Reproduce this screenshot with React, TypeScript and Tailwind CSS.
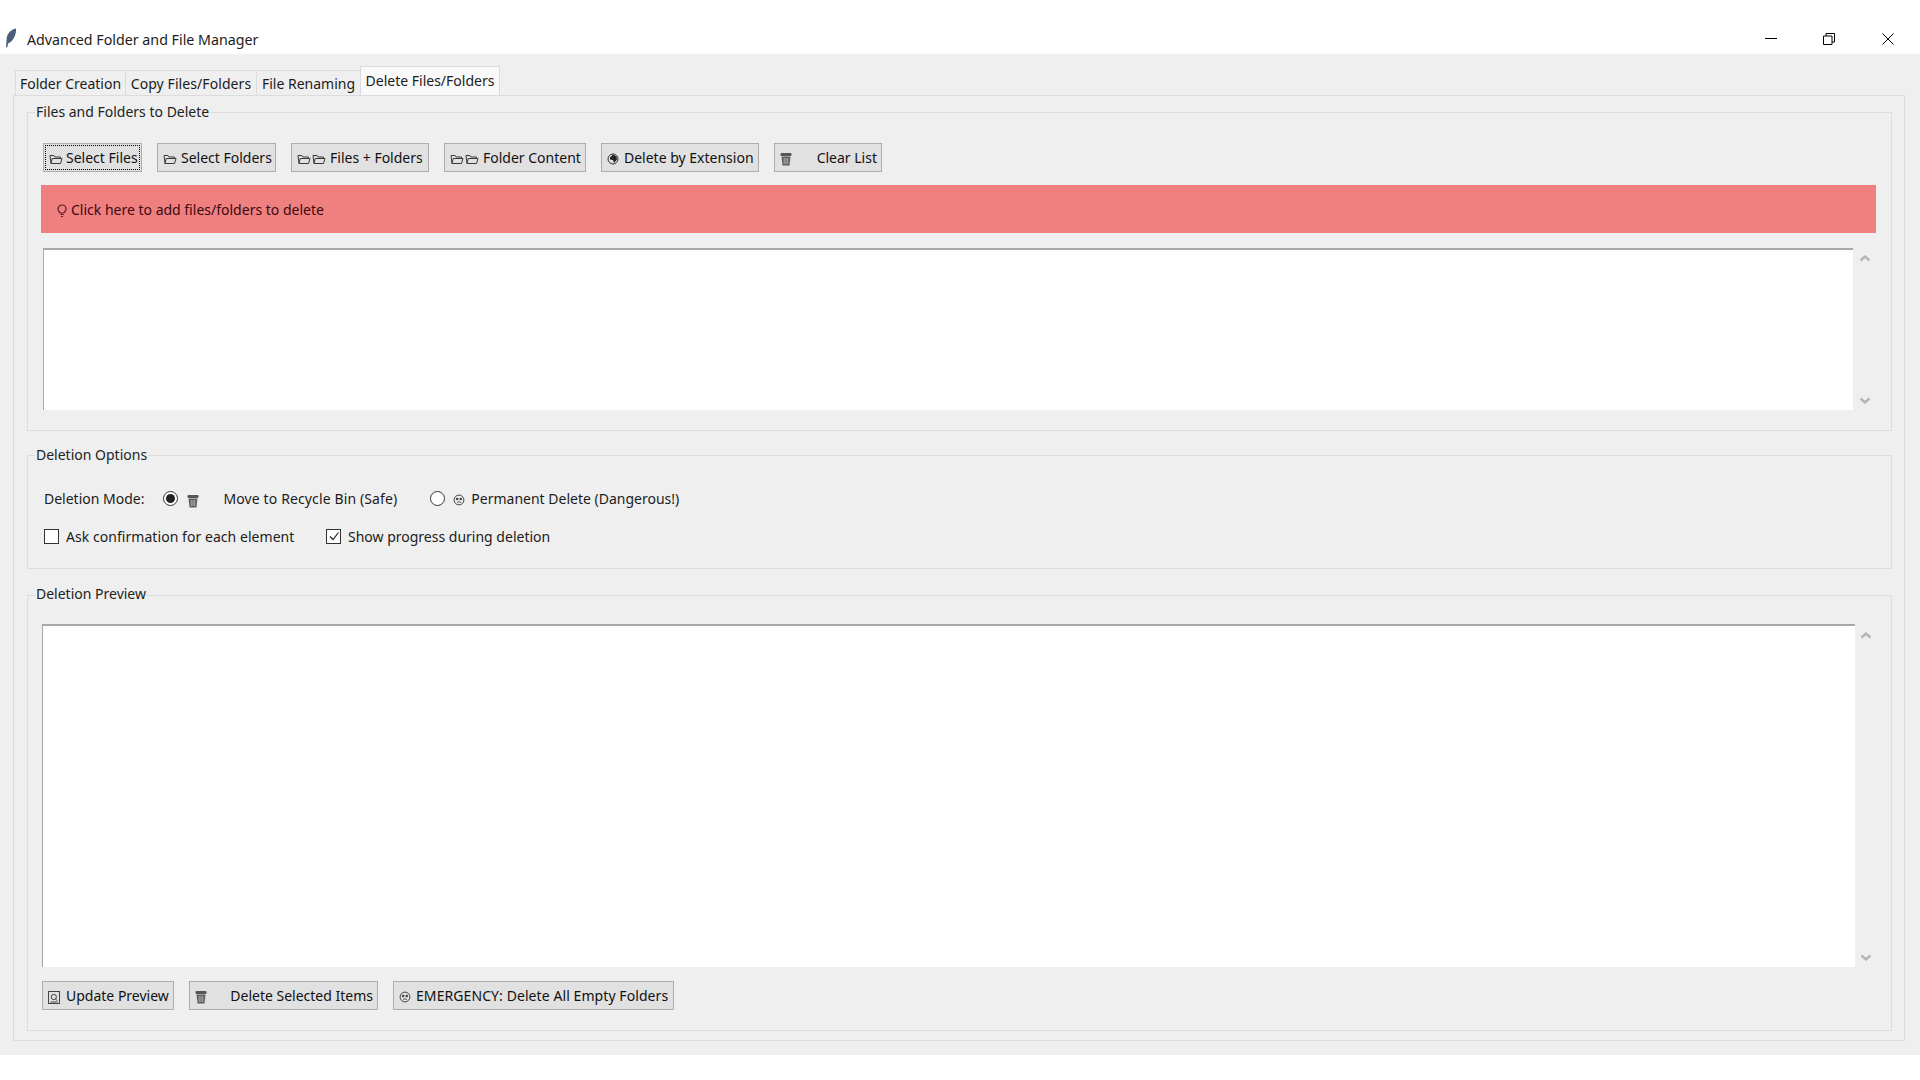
import type { ReactNode } from 'react';

const FolderIcon = ({ className = '' }: { className?: string }) => (
  <svg viewBox="0 0 14 12" className={`w-[14px] h-[12px] shrink-0 ${className}`} fill="none" stroke="#3a3a3a" strokeWidth="1">
    <path d="M2 10.5 1 2.5h4l1 1.5h5.5v1.5" />
    <path d="M2 10.5h9.5L13 5.5H3.2L2 10.5Z" />
  </svg>
);

const BinIcon = () => (
  <svg viewBox="0 0 12 14" className="w-[12px] h-[14px] shrink-0">
    <rect x="0.5" y="1" width="11" height="3" rx="1" fill="#555" />
    <path d="M1.5 4.5h9l-1 9h-7l-1-9Z" fill="#5e5e5e" />
    <path d="M4.2 6v6M6 6v6M7.8 6v6" stroke="#c4c4c4" strokeWidth="0.8" />
  </svg>
);

const FaceIcon = () => (
  <svg viewBox="0 0 12 12" className="w-[12px] h-[12px] shrink-0" fill="none" stroke="#444">
    <circle cx="6" cy="6" r="4.9" strokeWidth="1" />
    <circle cx="4.2" cy="5" r="1.3" fill="#444" stroke="none" />
    <circle cx="7.8" cy="5" r="1.3" fill="#444" stroke="none" />
    <path d="M4 8.6c1.2-1 2.8-1 4 0" strokeWidth="0.9" />
  </svg>
);

const GlobeIcon = () => (
  <svg viewBox="0 0 12 12" className="w-[12px] h-[12px] shrink-0">
    <circle cx="6" cy="6" r="5" fill="none" stroke="#333" />
    <path d="M3 4.5 6 1.5l3.5 2L10 6.5 7 10 6 7 3 6.5Z" fill="#222" />
  </svg>
);

const BulbIcon = () => (
  <svg viewBox="0 0 10 14" className="w-[10px] h-[14px] shrink-0 mt-[3px]" fill="none" stroke="#5a1a22" strokeWidth="1.2">
    <path d="M3.2 9C2 8 1 7 1 5a4 4 0 0 1 8 0c0 2-1 3-2.2 4Z" />
    <path d="M3.5 10.5h3M4 12.5h2" />
  </svg>
);

const PreviewIcon = () => (
  <svg viewBox="0 0 12 13" className="w-[12px] h-[13px] shrink-0" fill="none" stroke="#444">
    <rect x="0.5" y="0.5" width="11" height="12" />
    <circle cx="5.8" cy="6" r="2.6" />
    <path d="m7.6 8 1.6 1.8M2.5 11h7" />
  </svg>
);

const Btn = ({ w, focused, icon, right, textClass = 'ml-[4px]', children }: { w: string; focused?: boolean; icon: ReactNode; right?: boolean; textClass?: string; children: string }) => (
  <div className={`${w} h-[29px] shrink-0 border border-[#adadad] bg-[#e1e1e1] flex items-center pl-[5px] pr-[4px] text-[14px] text-[#111] ${focused ? 'outline-1 outline-dotted outline-black -outline-offset-3' : ''}`}>
    <span className="mt-[3px] flex gap-[1px]">{icon}</span>
    <span className={right ? 'ml-auto' : `${textClass} whitespace-nowrap`}>{children}</span>
  </div>
);

const Group = ({ title, titleTop = '-top-[11px]', className, children }: { title: string; titleTop?: string; className: string; children: ReactNode }) => (
  <div className={`relative border border-[#dcdcdc] pl-[13px] pr-[14px] ${className}`}>
    <span className={`absolute left-[7px] ${titleTop} bg-[#efefef] px-[1px] text-[14px] leading-[19px] text-[#222]`}>{title}</span>
    {children}
  </div>
);

const ScrollArrows = ({ top, bottom }: { top: string; bottom: string }) => (
  <div className="flex flex-col justify-between flex-1 items-center text-[#b4b4b4]">
    <svg viewBox="0 0 12 8" className={`w-[12px] h-[8px] ${top}`} fill="none" stroke="currentColor" strokeWidth="2.4"><path d="m1.5 6.5 4.5-4 4.5 4" /></svg>
    <svg viewBox="0 0 12 8" className={`w-[12px] h-[8px] ${bottom}`} fill="none" stroke="currentColor" strokeWidth="2.4"><path d="m1.5 1.5 4.5 4 4.5-4" /></svg>
  </div>
);

const Radio = ({ checked }: { checked?: boolean }) => (
  <span className="w-[15px] h-[15px] shrink-0 rounded-full border border-[#333] bg-white flex items-center justify-center">
    {checked && <span className="w-[9px] h-[9px] rounded-full bg-[#222]" />}
  </span>
);

const Check = ({ checked }: { checked?: boolean }) => (
  <span className="w-[15px] h-[15px] shrink-0 border border-[#333] bg-white flex items-center justify-center">
    {checked && (
      <svg viewBox="0 0 12 12" className="w-[12px] h-[12px]" fill="none" stroke="#222" strokeWidth="1.2"><path d="m2 6.5 3 3 5.5-7" /></svg>
    )}
  </span>
);

export default function App() {
  return (
    <div className="w-[1920px] h-[1080px] bg-white overflow-hidden text-[14px] text-[#1c1c1c]" style={{ fontFamily: '"Noto Sans", "Open Sans", sans-serif' }}>
      {/* title bar */}
      <div className="h-[54px] flex items-end pb-[5px] pl-[5px]">
        <svg viewBox="0 0 12 20" className="w-[12px] h-[20px] mb-[1px]">
          <path d="M11 0.5C5 1.5 1.5 6.5 1.5 12.5L1 19.5l1.3-.3.8-3.7C8 13.5 11.5 7 11 .5Z" fill="#4a5f7c" />
        </svg>
        <span className="ml-[10px] -mb-[1px] text-[14.25px] leading-[20px] text-[#1c1c1c]">Advanced Folder and File Manager</span>
        <div className="ml-auto flex items-center text-black h-[20px]">
          <svg viewBox="0 0 12 12" className="w-[12px] h-[12px] mr-[46px]" fill="none" stroke="currentColor"><path d="M0 5.5h12" /></svg>
          <svg viewBox="0 0 12 12" className="w-[12px] h-[12px] mr-[47px]" fill="none" stroke="currentColor"><path d="M.5 3h8.5v8.5H.5zM3 3V.5h8.5V9H9" /></svg>
          <svg viewBox="0 0 12 12" className="w-[12px] h-[12px] mr-[26px]" fill="none" stroke="currentColor"><path d="m.5.5 11 11M11.5.5l-11 11" /></svg>
        </div>
      </div>

      {/* window body */}
      <div className="h-[1001px] bg-[#efefef] pl-[13px] pr-[15px] pt-[12px]">
        <div className="flex h-[29px] items-end pl-[2px]">
          <div className="w-[111px] h-[25px] border border-b-0 border-[#dcdcdc] text-center leading-[25px]">Folder Creation</div>
          <div className="w-[131px] h-[25px] border-t border-r border-[#dcdcdc] text-center leading-[25px] tracking-[0.08px]">Copy Files/Folders</div>
          <div className="w-[103px] h-[25px] border-t border-[#dcdcdc] text-center leading-[25px]">File Renaming</div>
          <div className="w-[140px] h-[29px] border border-b-0 border-[#dcdcdc] bg-[#f9f9f9] text-center leading-[28px]">Delete Files/Folders</div>
        </div>

        <div className="h-[946px] border border-[#dcdcdc] pt-[16px] pl-[13px] pr-[12px]">
          <Group title="Files and Folders to Delete" className="h-[319px] pt-[30px] flex flex-col">
            <div className="flex gap-[15px] ml-[2px]">
              <Btn w="w-[99px]" focused textClass="ml-[3px]" icon={<FolderIcon />}>Select Files</Btn>
              <Btn w="w-[119px]" icon={<FolderIcon />}>Select Folders</Btn>
              <Btn w="w-[138px]" icon={<><FolderIcon /><FolderIcon /></>}>Files + Folders</Btn>
              <Btn w="w-[142px]" icon={<><FolderIcon /><FolderIcon /></>}>Folder Content</Btn>
              <Btn w="w-[158px]" textClass="ml-[5px]" icon={<GlobeIcon />}>Delete by Extension</Btn>
              <Btn w="w-[108px]" right icon={<BinIcon />}>Clear List</Btn>
            </div>
            <div className="h-[48px] mt-[13px] mr-[1px] bg-[#f08080] flex items-center pl-[16px] gap-[4px] text-[#3a0a10]">
              <BulbIcon />
              <span>Click here to add files/folders to delete</span>
            </div>
            <div className="flex h-[162px] mt-[15px] ml-[2px]">
              <div className="w-[1810px] bg-white border-t-2 border-l border-[#a8a8a8]" />
              <ScrollArrows top="mt-[6px]" bottom="mb-[5px]" />
            </div>
          </Group>

          <Group title="Deletion Options" className="h-[114px] mt-[24px] pt-[32px]">
            <div className="flex items-center h-[20px] ml-[3px]">
              <span>Deletion Mode:</span>
              <span className="ml-[19px]"><Radio checked /></span>
              <span className="ml-[9px] mt-[6px]"><BinIcon /></span>
              <span className="ml-[24px] tracking-[0.12px]">Move to Recycle Bin (Safe)</span>
              <span className="ml-[33px]"><Radio /></span>
              <span className="ml-[8px] mt-[4px]"><FaceIcon /></span>
              <span className="ml-[6px]">Permanent Delete (Dangerous!)</span>
            </div>
            <div className="flex items-center h-[20px] mt-[18px] ml-[3px]">
              <Check />
              <span className="ml-[7px] w-[260px] tracking-[0.05px]">Ask confirmation for each element</span>
              <Check checked />
              <span className="ml-[7px]">Show progress during deletion</span>
            </div>
          </Group>

          <Group title="Deletion Preview" titleTop="-top-[12px]" className="h-[436px] mt-[26px] pt-[28px]">
            <div className="flex h-[343px] ml-[1px]">
              <div className="w-[1813px] bg-white border-t-2 border-l border-[#a8a8a8]" />
              <ScrollArrows top="mt-[7px]" bottom="mb-[5px]" />
            </div>
            <div className="flex gap-[15px] mt-[14px] ml-[1px]">
              <Btn w="w-[132px]" textClass="ml-[6px]" icon={<PreviewIcon />}>Update Preview</Btn>
              <Btn w="w-[189px]" right icon={<BinIcon />}>Delete Selected Items</Btn>
              <Btn w="w-[281px]" textClass="ml-[5px] tracking-[0.08px]" icon={<FaceIcon />}>EMERGENCY: Delete All Empty Folders</Btn>
            </div>
          </Group>
        </div>
      </div>
    </div>
  );
}
